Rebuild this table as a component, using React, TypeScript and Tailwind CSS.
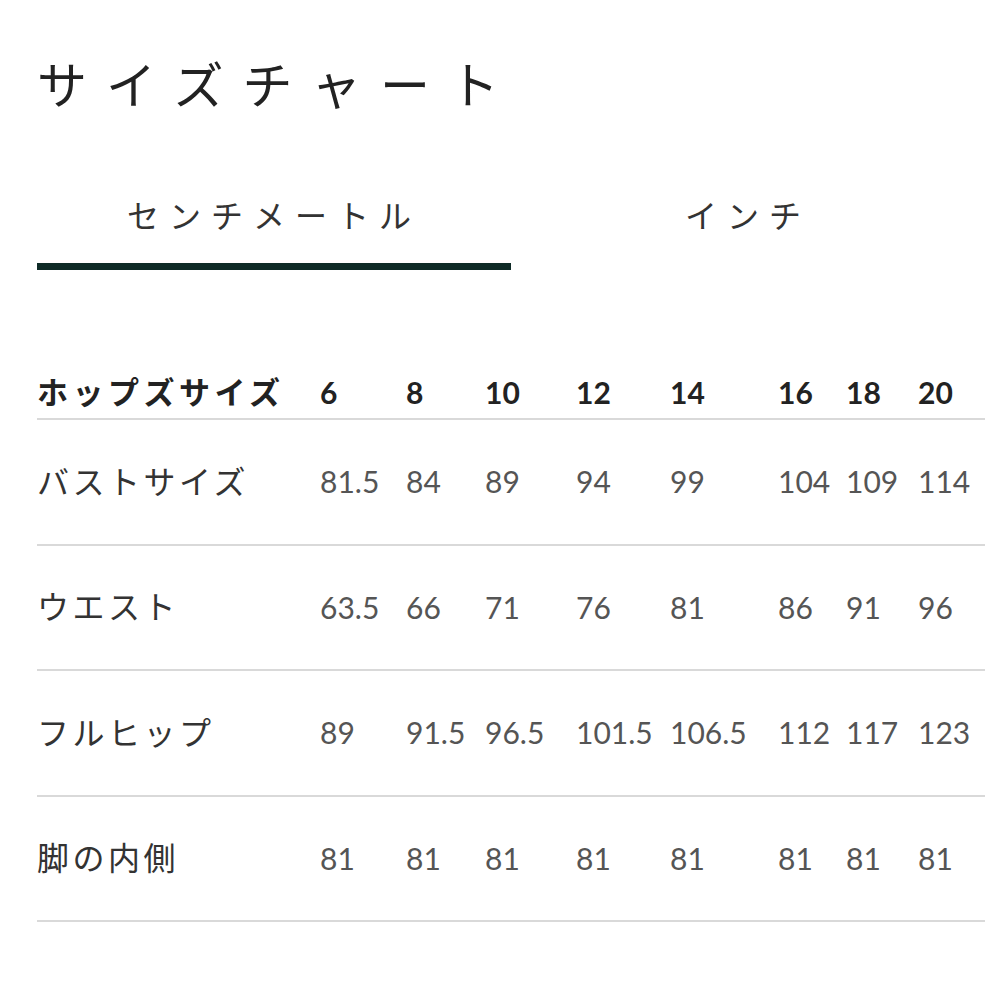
import React, { useState } from "react";

const sizes = ["6", "8", "10", "12", "14", "16", "18", "20"];

const rows: { label: string; values: string[] }[] = [
  { label: "バストサイズ", values: ["81.5", "84", "89", "94", "99", "104", "109", "114"] },
  { label: "ウエスト", values: ["63.5", "66", "71", "76", "81", "86", "91", "96"] },
  { label: "フルヒップ", values: ["89", "91.5", "96.5", "101.5", "106.5", "112", "117", "123"] },
  { label: "脚の内側", values: ["81", "81", "81", "81", "81", "81", "81", "81"] },
];

const gridCols = "grid grid-cols-[283px_86px_79px_91px_94px_108px_68px_72px_67px] items-center";

export default function App() {
  const [unit, setUnit] = useState<"cm" | "in">("cm");

  return (
    <div className="min-h-screen bg-white text-[#222] font-['Lato','Noto_Sans_CJK_JP',sans-serif]">
      <div className="pl-[37px] pr-[15px] pt-[50px] w-full">
        <h1 className="text-[50px] leading-[70px] font-normal tracking-[19px] text-[#222]">
          サイズチャート
        </h1>

        <div className="mt-[70px] grid grid-cols-2">
          <button
            onClick={() => setUnit("cm")}
            className={`h-[80px] flex items-start justify-center pt-[2px] text-[32px] tracking-[10px] text-[#333] border-b-[7px] ${
              unit === "cm" ? "border-[#0f2b27]" : "border-transparent"
            }`}
          >
            センチメートル
          </button>
          <button
            onClick={() => setUnit("in")}
            className={`h-[80px] flex items-start justify-center pt-[2px] text-[32px] tracking-[10px] text-[#333] border-b-[7px] ${
              unit === "in" ? "border-[#0f2b27]" : "border-transparent"
            }`}
          >
            インチ
          </button>
        </div>

        <div className="mt-[96px]">
          <div className={`${gridCols} h-[54px] border-b-2 border-[#d9d9d9] font-bold text-[30px] text-[#222]`}>
            <div className="text-[31px] tracking-[4.5px]">ホップズサイズ</div>
            {sizes.map((s) => (
              <div key={s}>{s}</div>
            ))}
          </div>
          {rows.map((r) => (
            <div
              key={r.label}
              className={`${gridCols} h-[125.5px] border-b-2 border-[#d9d9d9] text-[30px] text-[#555]`}
            >
              <div className="text-[32px] tracking-[3.5px] text-[#333]">{r.label}</div>
              {r.values.map((v, i) => (
                <div key={i}>{v}</div>
              ))}
            </div>
          ))}
        </div>
      </div>
    </div>
  );
}
